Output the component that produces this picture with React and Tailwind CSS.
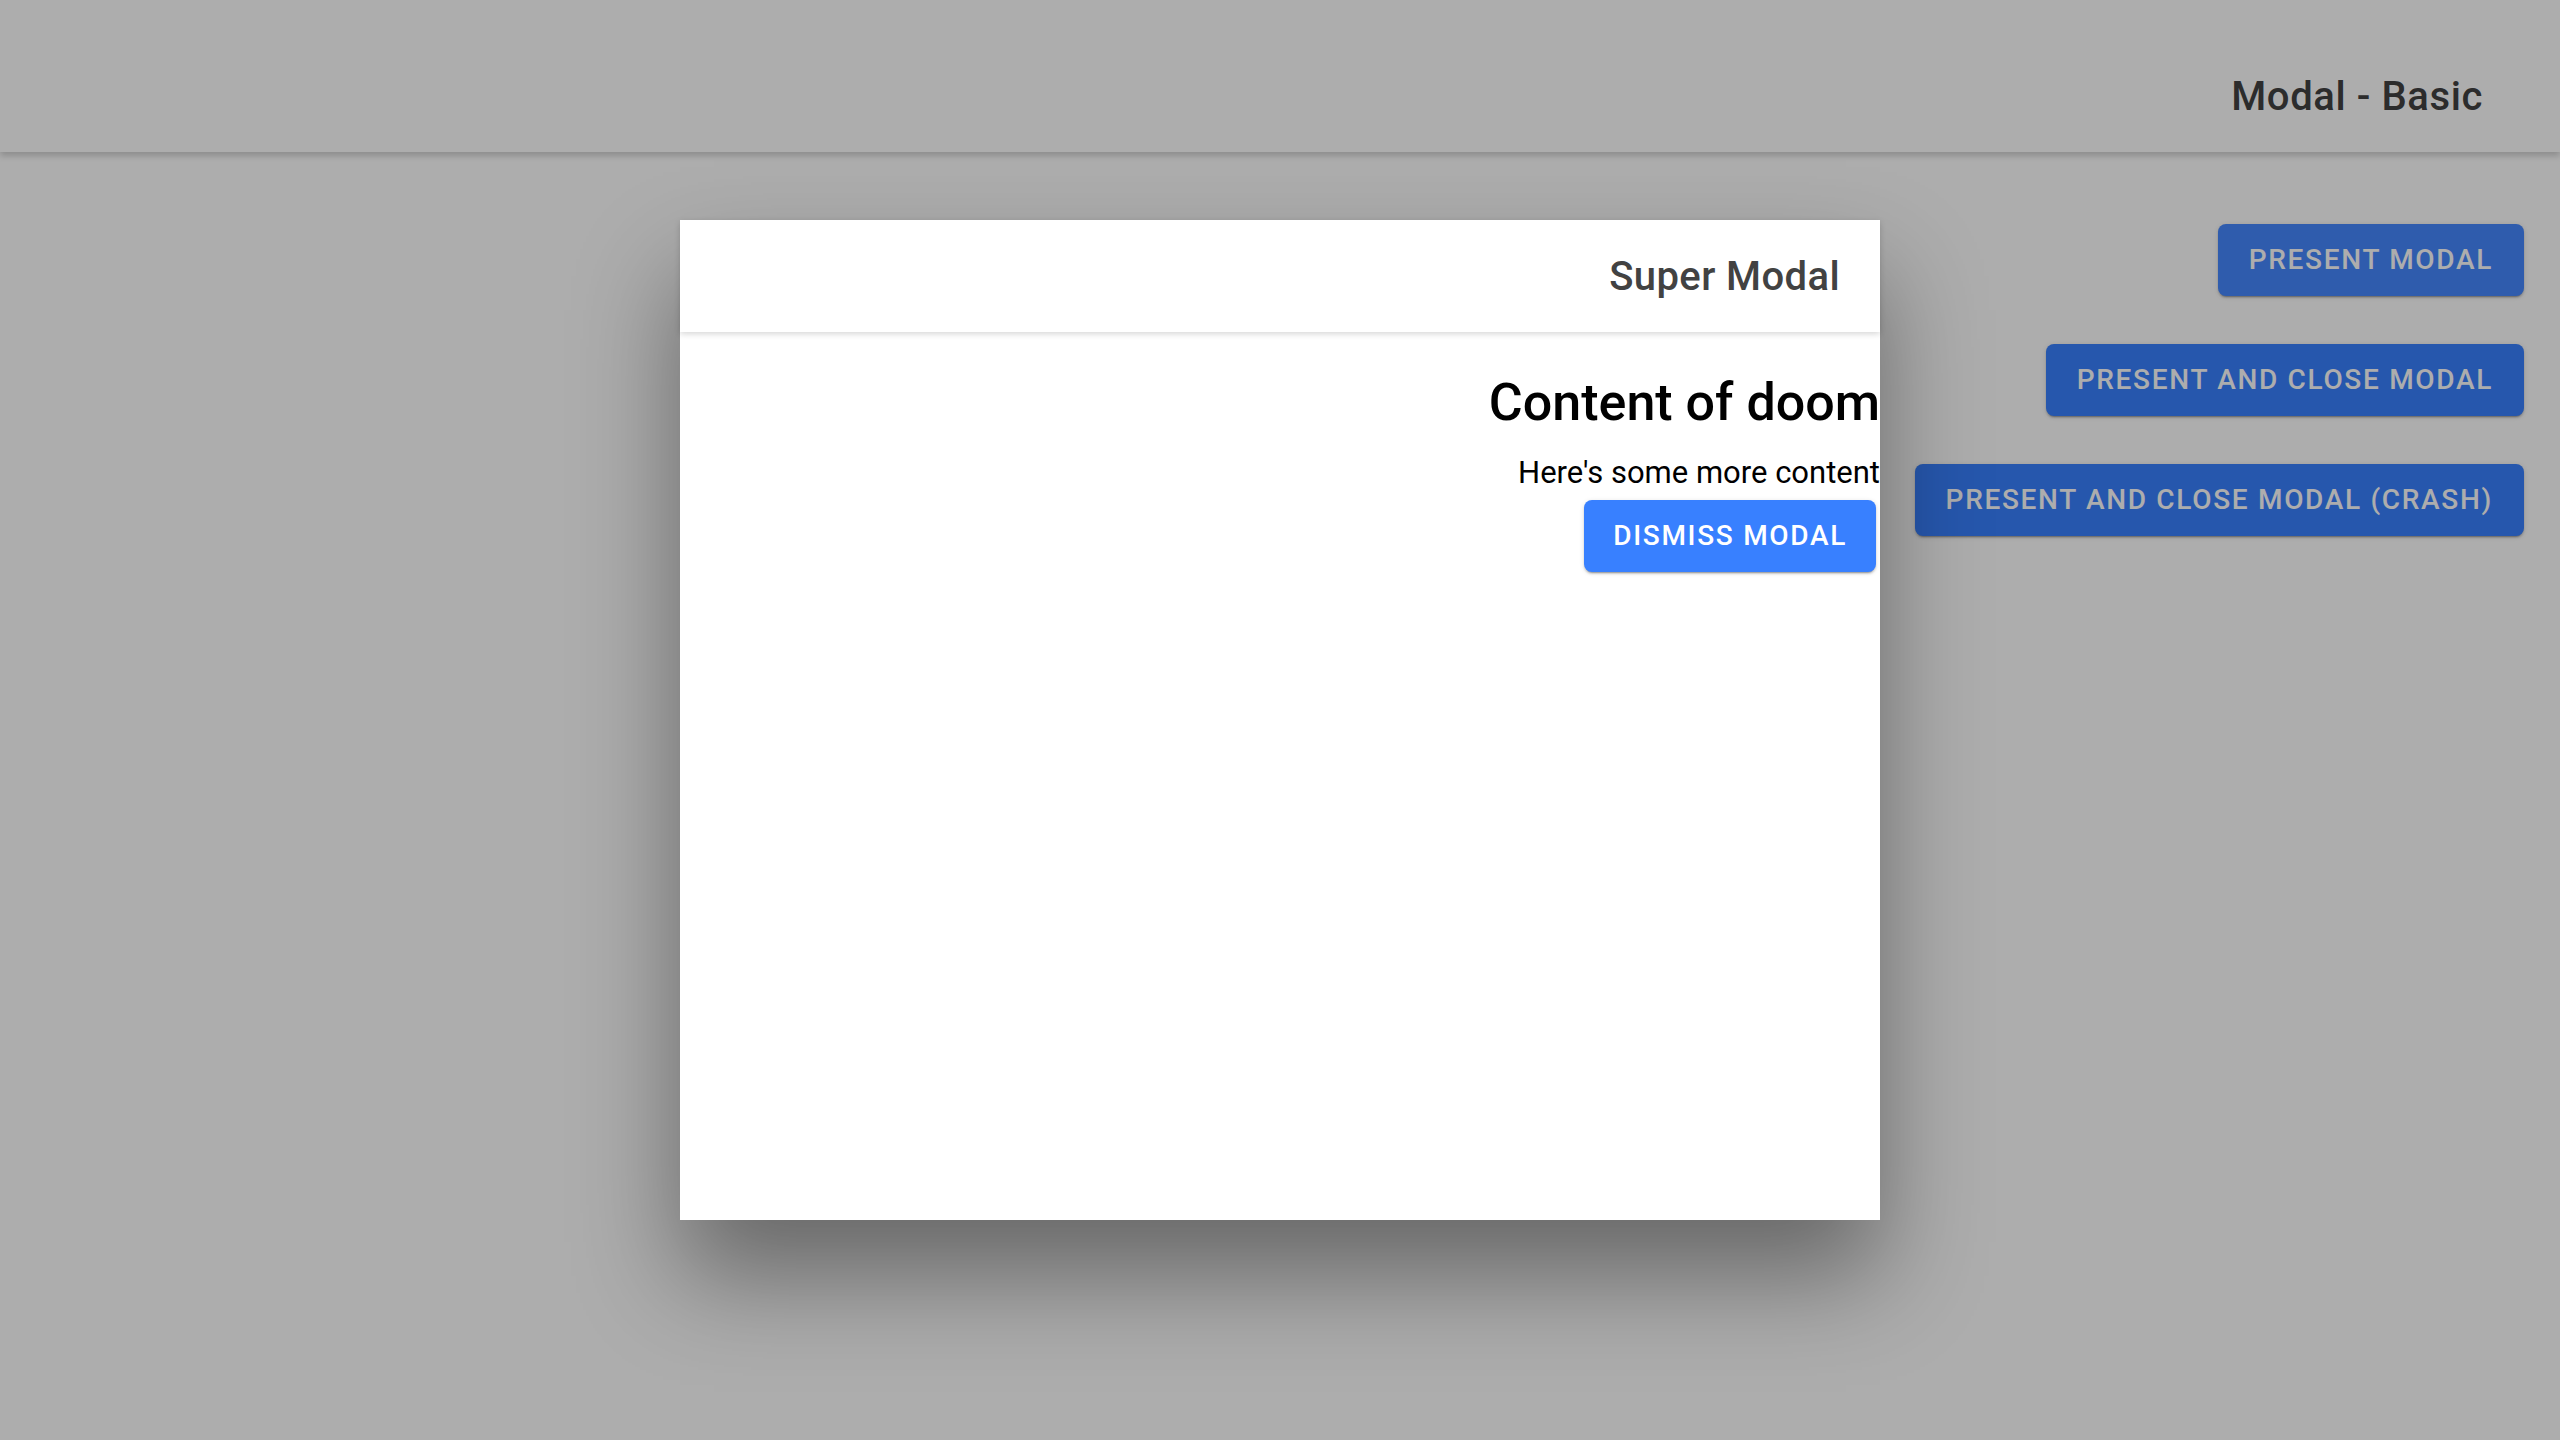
export default function App() {
    const btn =
        "h-[72px] rounded-[8px] text-[28px] font-medium uppercase tracking-[0.06em] text-white shadow-[0_3px_1px_-2px_rgba(0,0,0,0.2),0_2px_2px_0_rgba(0,0,0,0.14),0_1px_5px_0_rgba(0,0,0,0.12)]";

    return (
        <div className="relative h-screen w-screen overflow-hidden bg-white font-['Roboto',sans-serif]">
            {/* page */}
            <header className="relative z-10 flex h-[152px] items-end justify-end bg-white pr-[77px] shadow-[0_4px_6px_rgba(0,0,0,0.18)]">
                <div className="flex h-[112px] items-center pt-[2px]">
                    <h1 className="text-[40px] font-medium tracking-[0.015em] text-[#424242]">Modal - Basic</h1>
                </div>
            </header>

            <div className="flex flex-col items-end gap-[48px] pr-[36px] pt-[72px]">
                <button className={btn + " px-[31px] bg-[#4688ff]"}>Present modal</button>
                <button className={btn + " px-[31px] bg-[#3880ff]"}>Present and close modal</button>
                <button className={btn + " px-[31px] bg-[#3880ff]"}>Present and close modal (crash)</button>
            </div>

            {/* backdrop */}
            <div className="absolute inset-0 z-20 bg-black/[0.32]" />

            {/* modal */}
            <div className="absolute inset-0 z-30 flex items-center justify-center">
                <div className="flex h-[1000px] w-[1200px] flex-col bg-white shadow-[0_56px_96px_rgba(0,0,0,0.4)]">
                    <div className="relative z-10 flex h-[112px] shrink-0 items-center justify-end bg-white pr-[40px] pt-[2px] shadow-[0_2px_6px_rgba(0,0,0,0.16)]">
                        <h2 className="text-[40px] font-medium tracking-[0.01em] text-[#424242]">Super Modal</h2>
                    </div>
                    <div className="flex flex-col items-end text-black">
                        <h1 className="mb-[20px] mt-[40px] text-[52px] font-medium leading-[1.2]">Content of doom</h1>
                        <div className="text-[31px] leading-[1.2]">Here's some more content</div>
                        <button className={btn + " mr-[4px] mt-[8px] px-[29px] bg-[#3880ff]"}>
                            Dismiss modal
                        </button>
                    </div>
                </div>
            </div>
        </div>
    );
}
